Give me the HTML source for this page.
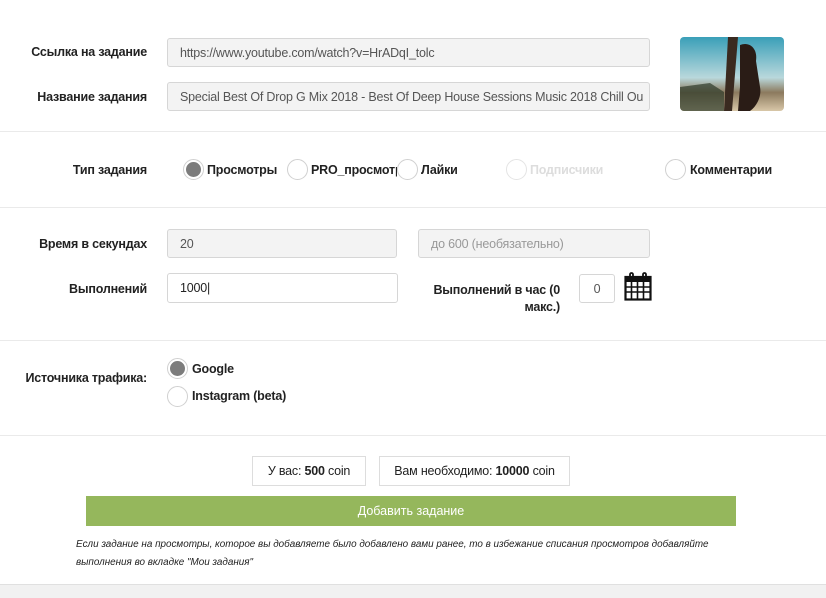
<!DOCTYPE html>
<html><head><meta charset="utf-8">
<style>
*{box-sizing:border-box;margin:0;padding:0}
body{width:826px;height:598px;background:#fff;font-family:"Liberation Sans","Noto Sans CJK SC",sans-serif;position:relative;overflow:hidden;color:#222}
.a{position:absolute}
.lbl{position:absolute;font-size:12.5px;font-weight:bold;text-align:right;letter-spacing:-0.2px;color:#222}
.inp{position:absolute;border:1px solid #d6d6d6;border-radius:3px;background:#f3f3f3;font-size:12.5px;color:#555;padding-left:12px;display:flex;align-items:center;white-space:nowrap;overflow:hidden;letter-spacing:-0.2px}
.w{background:#fff}
.hr{position:absolute;left:0;width:826px;height:1px;background:#eaeaea}
.r{position:absolute;width:21px;height:21px;border-radius:50%;border:1px solid #d0d0d0;background:#fff}
.r.on::after{content:"";position:absolute;left:2px;top:2px;width:15px;height:15px;border-radius:50%;background:#7c7c7c}
.rt{position:absolute;font-size:12.5px;font-weight:bold;letter-spacing:-0.2px}
.box{position:absolute;border:1px solid #ddd;font-size:12.5px;display:flex;align-items:center;justify-content:center;letter-spacing:-0.2px}
</style></head><body>
<div class="lbl" style="left:0;width:147px;top:45px">Ссылка на задание</div>
<div class="inp" style="left:167px;top:38px;width:483px;height:29px">https://www.youtube.com/watch?v=HrADqI_tolc</div>
<div class="lbl" style="left:0;width:147px;top:90px">Название задания</div>
<div class="inp" style="left:167px;top:82px;width:483px;height:29px">Special Best Of Drop G Mix 2018 - Best Of Deep House Sessions Music 2018 Chill Ou</div>
<svg class="a" style="left:680px;top:37px;border-radius:4px" width="104" height="74" viewBox="0 0 104 74">
<defs><linearGradient id="g" x1="0" y1="0" x2="0" y2="1"><stop offset="0" stop-color="#3a9fb8"/><stop offset=".55" stop-color="#b9d8dc"/><stop offset=".75" stop-color="#8c7a5e"/><stop offset="1" stop-color="#d8c7a8"/></linearGradient></defs>
<rect width="104" height="74" fill="url(#g)"/>
<path d="M48 0 L58 0 L52 74 L44 74 Z" fill="#3a2a20"/>
<path d="M60 8 C70 4 78 12 76 24 L80 50 C82 60 76 70 70 74 L58 74 L60 50 Z" fill="#2a1c16"/>
<path d="M0 50 L30 46 L44 55 L44 74 L0 74Z" fill="#2d3a2a" opacity=".7"/>
</svg>
<div class="hr" style="top:131px"></div>
<div class="lbl" style="left:0;width:147px;top:163px">Тип задания</div>
<div class="r on" style="left:183px;top:159px"></div><div class="rt" style="left:207px;top:163px">Просмотры</div>
<div class="r" style="left:287px;top:159px"></div><div class="rt" style="left:311px;top:163px;width:86px;overflow:hidden;white-space:nowrap">PRO_просмотры</div>
<div class="r" style="left:397px;top:159px"></div><div class="rt" style="left:421px;top:163px">Лайки</div>
<div class="r" style="left:506px;top:159px;border-color:#e4e4e4"></div><div class="rt" style="left:530px;top:163px;color:#ddd">Подписчики</div>
<div class="r" style="left:665px;top:159px"></div><div class="rt" style="left:690px;top:163px">Комментарии</div>
<div class="hr" style="top:207px"></div>
<div class="lbl" style="left:0;width:147px;top:237px">Время в секундах</div>
<div class="inp" style="left:167px;top:229px;width:230px;height:29px">20</div>
<div class="inp" style="left:418px;top:229px;width:232px;height:29px;color:#999">до 600 (необязательно)</div>
<div class="lbl" style="left:0;width:147px;top:282px">Выполнений</div>
<div class="inp w" style="left:167px;top:273px;width:231px;height:30px;color:#222">1000|</div>
<div class="lbl" style="left:420px;width:140px;top:282px;line-height:17px">Выполнений в час (0<br>макс.)</div>
<div class="inp w" style="left:579px;top:274px;width:36px;height:29px;justify-content:center;padding:0">0</div>
<svg class="a" style="left:624px;top:272px" width="28" height="29" viewBox="0 0 28 29">
<rect x="1.5" y="5" width="25" height="22.5" fill="none" stroke="#111" stroke-width="2.2"/>
<rect x="1.5" y="5" width="25" height="5" fill="#111"/>
<path d="M7.5 10v17M13.5 10v17M19.5 10v17M2 15h24M2 20h24" stroke="#111" stroke-width="1.6"/>
<path d="M6 6V2.5a1.5 1.5 0 0 1 3 0V6M19 6V2.5a1.5 1.5 0 0 1 3 0V6" fill="none" stroke="#111" stroke-width="1.8"/>
</svg>
<div class="hr" style="top:340px"></div>
<div class="lbl" style="left:0;width:147px;top:371px">Источника трафика:</div>
<div class="r on" style="left:167px;top:358px"></div><div class="rt" style="left:192px;top:362px">Google</div>
<div class="r" style="left:167px;top:386px"></div><div class="rt" style="left:192px;top:389px">Instagram (beta)</div>
<div class="hr" style="top:435px"></div>
<div class="box" style="left:252px;top:456px;width:114px;height:30px">У вас:&nbsp;<b>500</b>&nbsp;coin</div>
<div class="box" style="left:379px;top:456px;width:191px;height:30px">Вам необходимо:&nbsp;<b>10000</b>&nbsp;coin</div>
<div class="a" style="left:86px;top:496px;width:650px;height:30px;background:#95b75c;color:#fff;font-size:12.5px;display:flex;align-items:center;justify-content:center">Добавить задание</div>
<div class="a" style="left:76px;top:536px;width:662px;font-size:9.9px;font-style:italic;line-height:18px;color:#222">Если задание на просмотры, которое вы добавляете было добавлено вами ранее, то в избежание списания просмотров добавляйте выполнения во вкладке "Мои задания"</div>
<div class="a" style="left:0;top:584px;width:826px;height:14px;background:#f1f1f1;border-top:1px solid #e0e0e0"></div>
</body></html>
